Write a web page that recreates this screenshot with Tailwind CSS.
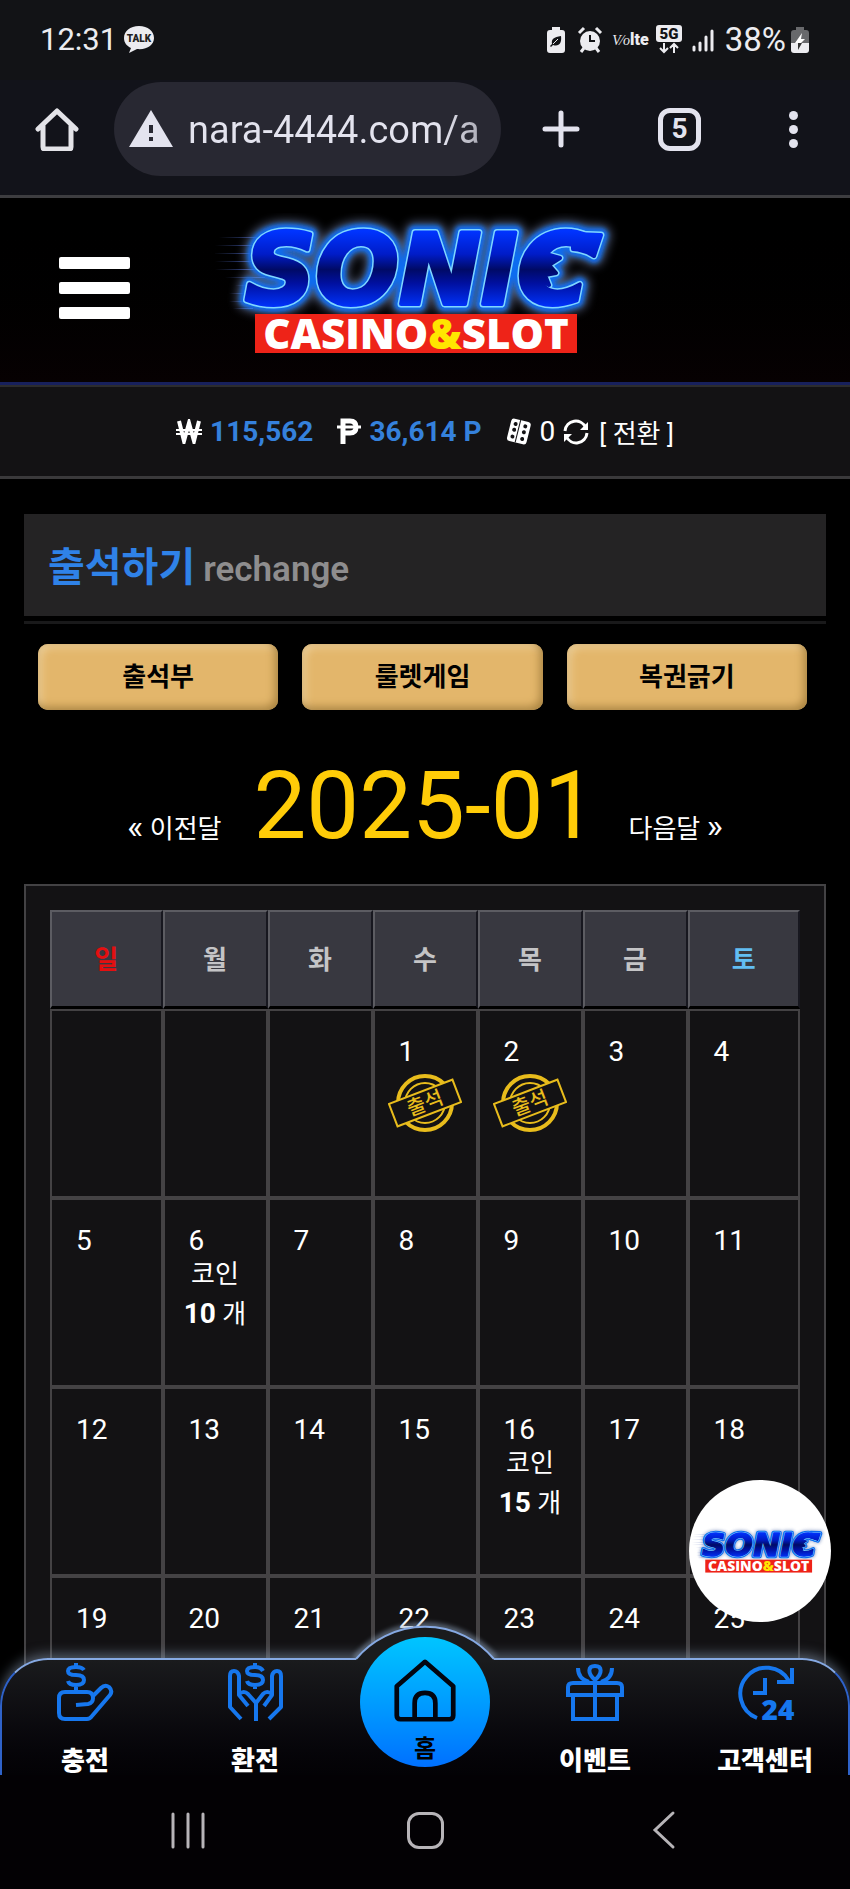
<!DOCTYPE html>
<html lang="ko">
<head>
<meta charset="utf-8">
<meta name="viewport" content="width=device-width, initial-scale=1">
<title>출석하기</title>
<script src="https://cdn.jsdelivr.net/npm/@tailwindcss/browser@4"></script>
</head>
<body class="flex h-screen flex-col overflow-hidden bg-black font-['Roboto','Noto_Sans_CJK_KR',sans-serif] text-white">

<!-- shared logo -->
<svg class="absolute h-0 w-0" aria-hidden="true">
  <defs>
    <filter id="glow" x="-15%" y="-30%" width="130%" height="160%"><feGaussianBlur stdDeviation="5"/></filter>
    <filter id="soft" x="-15%" y="-30%" width="130%" height="160%"><feGaussianBlur stdDeviation="2"/></filter>
    <linearGradient id="letter" gradientUnits="userSpaceOnUse" x1="0" y1="18" x2="0" y2="95">
      <stop offset="0" stop-color="#0034ff"/><stop offset=".3" stop-color="#001cc8"/><stop offset=".5" stop-color="#000a66"/><stop offset=".68" stop-color="#0010a0"/><stop offset="1" stop-color="#0034ff"/>
    </linearGradient>
    <linearGradient id="speed" x1="0" x2="1"><stop offset="0" stop-color="#4a5c9c" stop-opacity="0"/><stop offset="1" stop-color="#3f62d8"/></linearGradient>
    <!-- wordmark with the spiked last letter -->
    <g id="word" font-family="DejaVu Sans" font-weight="700" font-style="italic" font-size="98" stroke-linejoin="round">
      <text x="30" y="91">SONIC</text>
      <path d="M358 21L386 22L379 43Q370 37 358 36z"/>
      <path d="M331 41L345 45L334 52L341 60L330 62L334 72L322 66z"/>
    </g>
    <symbol id="logo" viewBox="0 0 410 150">
      <g fill="url(#speed)">
        <rect x="4" y="24" width="50" height="1"/><rect x="0" y="32" width="50" height="1"/><rect x="-2" y="40" width="50" height="1"/><rect x="0" y="48" width="45" height="1"/><rect x="0" y="56" width="45" height="1"/><rect x="10" y="64" width="40" height="1"/><rect x="20" y="72" width="20" height="1"/><rect x="14" y="80" width="20" height="1"/><rect x="14" y="88" width="20" height="1"/><rect x="18" y="95" width="20" height="1"/>
      </g>
      <use href="#word" fill="#8fa0c8" stroke="#7f92c0" stroke-width="20" opacity=".6" filter="url(#glow)"/>
      <use href="#word" fill="#0b6cf0" stroke="#0b6cf0" stroke-width="14" filter="url(#soft)"/>
      <use href="#word" fill="#7fd6ff" stroke="#7fd6ff" stroke-width="7"/>
      <use href="#word" fill="url(#letter)" stroke="url(#letter)" stroke-width="4"/>
      <rect x="40" y="101" width="322" height="39" fill="#ee2318"/>
      <text x="201" y="136" text-anchor="middle" font-family="Open Sans" font-weight="800" font-size="42" fill="#fff">CASINO<tspan fill="#ffe600">&amp;</tspan>SLOT</text>
    </symbol>
    <symbol id="stamp" viewBox="0 0 74 60">
      <g fill="none" stroke="#e8bc1c">
        <circle cx="37" cy="30" r="27" stroke-width="4"/>
        <circle cx="37" cy="30" r="20" stroke-width="2"/>
        <g transform="rotate(-21 37 30)">
          <rect x="3" y="18" width="68" height="24" fill="#131214" stroke-width="2"/>
          <text x="37" y="37" text-anchor="middle" stroke="none" fill="#e8bc1c" font-family="Noto Sans CJK KR" font-weight="500" font-size="20">출석</text>
        </g>
      </g>
    </symbol>
  </defs>
</svg>

<!-- phone status bar -->
<div class="flex h-20 shrink-0 items-center bg-[#121316] pr-10 pl-10 text-[#ececf0]">
  <span class="text-[31px] leading-8">12:31</span>
  <svg class="ml-1.5 h-8 w-8" viewBox="0 0 32 32"><path d="M16 2C7 2 1 7 1 14c0 5 3 8 7 10l-2 5 8-4c10 1 17-4 17-11S25 2 16 2z" fill="#ececf0"/><text x="16" y="18" text-anchor="middle" font-family="Roboto" font-weight="900" font-size="10" fill="#222">TALK</text></svg>
  <div class="ml-auto flex items-center">
    <svg class="h-7 w-5" viewBox="0 0 20 28"><path d="M6 1h8v3h2q3 0 3 3v17q0 3-3 3H4q-3 0-3-3V7q0-3 3-3h2z" fill="#ececf0"/><path d="M4 20l2-2c-1-5 2-7 9-8 1 7-2 11-8 9l-2 2z" fill="#121316"/><path d="M7 18l5-5" stroke="#ececf0"/></svg>
    <svg class="ml-2.5 h-7 w-7" viewBox="0 0 28 28"><circle cx="14" cy="15" r="10" fill="#ececf0"/><path d="M3 7l5-5M25 7l-5-5M5 26l3-4M23 26l-3-4" stroke="#ececf0" stroke-width="3"/><path d="M14 9v6h5" fill="none" stroke="#121316" stroke-width="2"/></svg>
    <span class="ml-2 flex items-baseline text-base leading-7 font-black"><i class="font-['Liberation_Serif'] text-sm font-normal">V⁄o</i>lte</span>
    <svg class="ml-1.5 h-8 w-7" viewBox="0 0 28 32"><rect x="1" y="1" width="26" height="17" rx="3" fill="#ececf0"/><text x="14" y="15" text-anchor="middle" font-family="Roboto" font-weight="900" font-size="15" fill="#121316">5G</text><path d="M9 19v9m-4-4l4 4 4-4M19 29v-9m-4 4l4-4 4 4" fill="none" stroke="#ececf0" stroke-width="2"/></svg>
    <svg class="ml-2 h-6 w-6" viewBox="0 0 24 24" stroke="#ececf0" stroke-width="3" stroke-linecap="round"><path d="M3 22v-3M9 22v-7M15 22V9M21 22V3"/></svg>
    <span class="ml-2.5 text-[33px] leading-8">38%</span>
    <svg class="ml-1 h-7 w-5" viewBox="0 0 20 28"><path d="M6 1h8v3h2q3 0 3 3v10H1V7q0-3 3-3h2z" fill="#68696c"/><path d="M1 17h18v7q0 3-3 3H4q-3 0-3-3z" fill="#ececf0"/><path d="M12 7l-1 6h4l-4 4H5z" fill="#fff"/><path d="M8 17h4l-4 7z" fill="#333"/></svg>
  </div>
</div>

<!-- browser toolbar -->
<div class="flex h-[118px] shrink-0 items-center border-b-3 border-[#3d3d40] bg-[#12131a] pr-10 pb-[17px] pl-[35px]">
  <button aria-label="홈페이지"><svg class="h-11 w-11" viewBox="0 0 44 44" fill="none" stroke="#e3e3e8" stroke-width="5" stroke-linejoin="round" stroke-linecap="round"><path d="M3 22L22 4l19 18M8 19v21q0 2 2 2h24q2 0 2-2V19"/></svg></button>
  <div class="ml-[35px] flex h-[94px] w-[387px] items-center rounded-full bg-[#282832] pl-[14px]">
    <svg class="h-10 w-[46px] shrink-0" viewBox="0 0 46 40"><path d="M23 1l22 37H1z" fill="#e3e3ee"/><path d="M21 16h4v8h-4zM21 28h4v4h-4z" fill="#282832"/></svg>
    <input aria-label="주소" value="nara-4444.com/a" class="ml-3.5 w-[300px] bg-linear-to-r from-[#e3e3ee] from-85% to-[#a0a0aa] bg-clip-text pt-0.5 text-[38px] leading-[48px] text-transparent outline-none">
  </div>
  <button aria-label="새 탭" class="ml-10"><svg class="h-10 w-10" viewBox="0 0 40 40" stroke="#e3e3ee" stroke-width="5" stroke-linecap="round"><path d="M20 4v32M4 20h32"/></svg></button>
  <button aria-label="탭 5개" class="ml-[77px] flex h-[43px] w-[43px] items-center justify-center rounded-xl border-[5px] border-[#e3e3ee] text-[28px] leading-8 font-bold text-[#e3e3ee]">5</button>
  <button aria-label="메뉴" class="ml-auto flex w-[34px] flex-col items-center gap-[5px]"><i class="h-[9px] w-[9px] rounded-full bg-[#e3e3ee]"></i><i class="h-[9px] w-[9px] rounded-full bg-[#e3e3ee]"></i><i class="h-[9px] w-[9px] rounded-full bg-[#e3e3ee]"></i></button>
</div>

<div class="relative min-h-0 flex-1 overflow-hidden">
  <!-- site header -->
  <header class="flex h-[189px] items-center border-b-2 border-[#2c2c2e] bg-linear-to-b from-black to-[#070102] pb-[7px] pl-[59px] shadow-[inset_0_-3px_0_#17205c]">
    <button aria-label="메뉴 열기" class="flex w-[71px] flex-col gap-[13px]"><i class="h-3 rounded-xs bg-white"></i><i class="h-3 rounded-xs bg-white"></i><i class="h-3 rounded-xs bg-white"></i></button>
    <a href="#" aria-label="SONIC CASINO&SLOT" class="ml-[85px]"><svg class="h-[150px] w-[410px]"><use href="#logo"/></svg></a>
  </header>

  <!-- balance -->
  <div class="flex h-[92px] items-center justify-center border-b-3 border-[#3a393b] bg-[#131214] text-[28px] leading-9">
    <svg class="h-[25px] w-[26px]" viewBox="0 0 26 25" fill="none" stroke="#fff"><path d="M3 2l5 20 5-18 5 18 5-20" stroke-width="4"/><path d="M0 11h26M0 15h26" stroke-width="2"/></svg>
    <b class="ml-2 text-[#3581dc]">115,562</b>
    <svg class="ml-6 h-[27px] w-6" viewBox="0 0 24 27" fill="none" stroke="#fff"><path d="M6 26V3h7q6 0 6 6t-6 6H6" stroke-width="5"/><path d="M0 9h24" stroke-width="3"/></svg>
    <b class="ml-2 text-[#3581dc]">36,614 P</b>
    <svg class="ml-6 h-[27px] w-[26px]" viewBox="0 0 26 27"><g transform="rotate(14 13 13)"><rect x="3" y="2" width="20" height="23" rx="3" fill="#fff"/><path d="M12 2v23" stroke="#131214"/><g fill="#131214"><circle cx="8" cy="7" r="2"/><circle cx="8" cy="13" r="2"/><circle cx="8" cy="20" r="2"/><circle cx="18" cy="7" r="2"/><circle cx="18" cy="13" r="2"/><circle cx="18" cy="20" r="2"/></g></g></svg>
    <span class="ml-2">0</span>
    <a href="#" class="ml-2 flex items-center text-[26px]"><svg class="mr-2.5 h-[26px] w-[26px]" viewBox="0 0 26 26" fill="none" stroke="#fff" stroke-width="3"><path d="M2 12C3 1 18-2 23 9M24 14C23 25 8 28 3 17"/><path d="M25 3v8h-8zM1 23v-8h8z" fill="#fff" stroke="none"/></svg><span class="pt-1">[ 전환 ]</span></a>
  </div>

  <main class="px-6 pt-[35px]">
    <div class="border-b-3 border-[#19191a] pb-[5px]">
      <h1 class="flex h-[102px] items-baseline bg-[#242324] px-6 pt-6 text-[40px] leading-[60px] font-bold text-[#2f82e8]">출석하기<small class="ml-2 text-[35px] font-semibold text-[#8e8d8e]">rechange</small></h1>
    </div>

    <div class="mt-5 mr-[19px] ml-3.5 grid grid-cols-3 gap-6 text-[26px] leading-9 font-bold text-black">
      <button class="h-[66px] rounded-[10px] bg-[#e3b66b] shadow-[inset_-3px_-3px_8px_#a8823f,inset_3px_3px_8px_#efd3a0]">출석부</button>
      <button class="h-[66px] rounded-[10px] bg-[#e3b66b] shadow-[inset_-3px_-3px_8px_#a8823f,inset_3px_3px_8px_#efd3a0]">룰렛게임</button>
      <button class="h-[66px] rounded-[10px] bg-[#e3b66b] shadow-[inset_-3px_-3px_8px_#a8823f,inset_3px_3px_8px_#efd3a0]">복권긁기</button>
    </div>

    <div class="flex h-[174px] items-baseline justify-center pt-10 text-[26px]">
      <a href="#"><span class="text-[34px] leading-9">«</span> 이전달</a>
      <span class="mx-8 text-[94px] leading-[112px] text-[#ffcc08]">2025-01</span>
      <a href="#">다음달 <span class="text-[34px] leading-9">»</span></a>
    </div>

    <section class="border-2 border-[#434244] bg-[#131214] p-6">
      <table class="w-full table-fixed border-separate border-spacing-0 text-[28px] [&_b]:text-[28px] [&_p]:text-center [&_p]:text-[26px] [&_td]:h-[189px] [&_td]:border-2 [&_td]:border-[#444244] [&_td]:pt-[25px] [&_td]:align-top [&_td>span]:block [&_td>span]:pl-6 [&_td>span]:leading-8 [&_th]:h-[99px] [&_th]:border-t-2 [&_th]:border-r-2 [&_th]:border-b-3 [&_th]:border-l-2 [&_th]:border-t-[#5c5c62] [&_th]:border-r-[#17171f] [&_th]:border-b-black [&_th]:border-l-[#5c5c62] [&_th]:bg-[#383840] [&_th]:pt-0.5 [&_th]:text-[26px]">
        <colgroup><col class="w-[15%]"><col class="w-[14%]"><col class="w-[14%]"><col class="w-[14%]"><col class="w-[14%]"><col class="w-[14%]"><col class="w-[15%]"></colgroup>
        <thead class="text-[#c4c4c6]"><tr><th class="text-[#e40f10]">일</th><th>월</th><th>화</th><th>수</th><th>목</th><th>금</th><th class="text-[#62bdf2]">토</th></tr></thead>
        <tbody>
          <tr><td></td><td></td><td></td>
            <td><span>1</span><svg class="mx-auto mt-[5px] h-[60px] w-[74px]" role="img" aria-label="출석"><use href="#stamp"/></svg></td>
            <td><span>2</span><svg class="mx-auto mt-[5px] h-[60px] w-[74px]" role="img" aria-label="출석"><use href="#stamp"/></svg></td>
            <td><span>3</span></td><td><span>4</span></td></tr>
          <tr><td><span>5</span></td><td><span>6</span><p class="leading-[34px]">코인</p><p class="leading-[46px]"><b>10</b> 개</p></td><td><span>7</span></td><td><span>8</span></td><td><span>9</span></td><td><span>10</span></td><td><span>11</span></td></tr>
          <tr><td><span>12</span></td><td><span>13</span></td><td><span>14</span></td><td><span>15</span></td><td><span>16</span><p class="leading-[34px]">코인</p><p class="leading-[46px]"><b>15</b> 개</p></td><td><span>17</span></td><td><span>18</span></td></tr>
          <tr><td><span>19</span></td><td><span>20</span></td><td><span>21</span></td><td><span>22</span></td><td><span>23</span></td><td><span>24</span></td><td><span>25</span></td></tr>
        </tbody>
      </table>
    </section>
  </main>

  <!-- floating logo button -->
  <a href="#" aria-label="SONIC CASINO&SLOT" class="absolute right-[19px] bottom-[153px] flex h-[142px] w-[142px] items-center justify-center rounded-full bg-white"><svg class="h-[50px] w-[136px]"><use href="#logo"/></svg></a>

  <!-- bottom tab bar -->
  <nav class="absolute inset-x-0 bottom-0 h-[117px]">
    <div class="absolute inset-0 rounded-t-[48px] border-2 border-b-0 border-x-[#2f62c8] border-t-[#86a9e2] bg-linear-to-b from-[#1a1b1d] to-[#030205] shadow-[0_-4px_12px_#8da0b880]"></div>
    <svg class="absolute -top-[42px] left-1/2 h-[60px] w-[160px] -translate-x-1/2" viewBox="0 0 160 60">
      <defs><clipPath id="above"><path d="M0 0h160v43H0z"/></clipPath></defs>
      <path d="M11 43A90 90 0 0 1 149 43" fill="none" stroke="#8da0b8" stroke-width="9" opacity=".5" filter="url(#soft)" clip-path="url(#above)"/>
      <path d="M11 43A90 90 0 0 1 149 43V46H11z" fill="#1a1b1d"/>
      <path d="M11 43A90 90 0 0 1 149 43" fill="none" stroke="#86a9e2" stroke-width="2"/>
    </svg>
    <div class="relative grid grid-cols-5 text-[26px] leading-9 font-black [&>a]:flex [&>a]:flex-col [&>a]:items-center [&>a]:pt-[5px]">
      <a href="#"><svg class="h-[58px] w-[58px]" viewBox="0 0 58 58" fill="none" stroke="#1677ee" stroke-width="4" stroke-linejoin="round"><path d="M28 7q-2-3-8-3-8 0-8 4 0 4 8 4t8 5q0 5-8 5-7 0-8-4M20 0v4M20 22v7"/><path d="M20 42l12-1q5-1 5-6 0-6-6-6H9q-6 0-6 6v15q0 6 6 6h22q3 0 5-3l18-21q3-4-1-8-4-3-8 1L36 34"/></svg><span class="mt-[22px]">충전</span></a>
      <a href="#"><svg class="h-[58px] w-[58px]" viewBox="0 0 58 58" fill="none" stroke="#1677ee" stroke-width="4" stroke-linejoin="round"><path d="M37 8q-2-4-8-4-8 0-8 4 0 4 8 4t8 5q0 5-8 5-7 0-8-4M29 0v4M29 22v4"/><path d="M15 56L4 44V13q0-5 4-5t5 5v19l9 11M13 31q5-4 9 0l8 9v18M43 56l12-12V13q0-5-4-5t-5 5v19l-8 11M46 31q-5-4-9 0l-7 9"/></svg><span class="mt-[22px]">환전</span></a>
      <a href="#" class="-mt-[26px] text-black"><span class="flex h-[130px] w-[130px] flex-col items-center rounded-full bg-linear-to-b from-[#00c5ff] to-[#0070ff] pt-[22px]"><svg class="h-[68px] w-[68px]" viewBox="0 0 68 68" fill="none" stroke="#020510" stroke-width="5" stroke-linejoin="round"><path d="M34 3L4 29v31q0 4 4 4h52q4 0 4-4V29zM23 64V47q0-11 11-11t11 11v17"/></svg><span class="mt-2 text-2xl leading-9 font-bold">홈</span></span></a>
      <a href="#"><svg class="h-[58px] w-[58px]" viewBox="0 0 58 58" fill="none" stroke="#1677ee" stroke-width="4"><path d="M2 32V24q0-4 5-4h44q5 0 5 4v8zM7 32v24h44V32M29 20v36M29 17c-8-7-7-14 0-14s8 7 0 14zM12 5c0 8 4 12 11 14M46 5c0 8-4 12-11 14"/></svg><span class="mt-[22px]">이벤트</span></a>
      <a href="#"><svg class="h-[58px] w-[58px] overflow-visible" viewBox="0 0 58 58" fill="none" stroke="#1677ee" stroke-width="4"><path d="M21 55A26 26 0 1 1 53 18M56 5v14H41M29 15v15H17"/><text x="42" y="57" text-anchor="middle" fill="#1677ee" stroke="none" font-family="Open Sans" font-size="28" font-weight="800">24</text></svg><span class="mt-[22px]">고객센터</span></a>
    </div>
  </nav>
</div>

<!-- system navigation -->
<div class="flex h-[114px] shrink-0 items-center justify-between bg-[#030104] px-[169px] pb-1">
  <button aria-label="최근 앱"><svg class="h-[38px] w-[38px]" viewBox="0 0 38 38" stroke="#b7b4b8" stroke-width="3" stroke-linecap="round"><path d="M4 3v33M19 3v33M34 3v33"/></svg></button>
  <button aria-label="홈" class="h-[37px] w-[37px] rounded-xl border-3 border-[#b7b4b8]"></button>
  <button aria-label="뒤로"><svg class="h-10 w-[38px]" viewBox="0 0 38 40" fill="none" stroke="#b7b4b8" stroke-width="3" stroke-linecap="round"><path d="M30 3L12 20l18 17"/></svg></button>
</div>
</body>
</html>
